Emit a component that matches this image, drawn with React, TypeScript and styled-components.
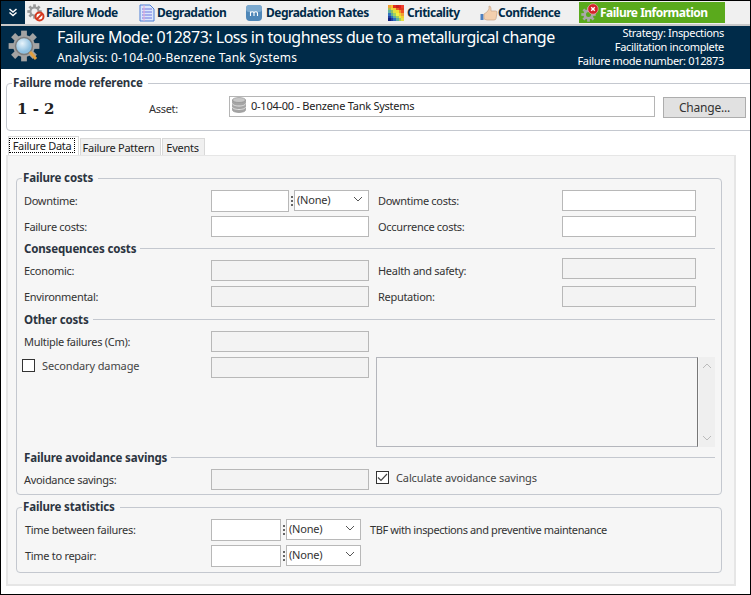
import React from 'react';
import styled, { createGlobalStyle } from 'styled-components';

const Global = createGlobalStyle`
  html, body { margin: 0; padding: 0; background: #fff; }
  body { font-family: "Noto Sans", "Open Sans", sans-serif; font-size: 11px; color: #333; }
  * { box-sizing: border-box; }
`;

const Frame = styled.div`
  width: 751px; height: 595px; border: 1px solid #000; background: #fff;
  display: flex; flex-direction: column; overflow: hidden;
`;
const Toolbar = styled.div`
  height: 25px; flex: none; display: flex; align-items: stretch;
  background: #f0f0f0; border-bottom: 2px solid #c9c9c9;
`;
const Chevron = styled.div`
  width: 24px; background: #002b49; display: flex; align-items: center; justify-content: center;
`;
const ToolItem = styled.div<{ $active?: boolean; $w: number; $gap: number }>`
  width: ${p => p.$w}px; flex: none; display: flex; align-items: center; gap: ${p => p.$gap}px;
  font-weight: 700; font-size: 12px; letter-spacing: -0.5px; white-space: nowrap; padding-left: 2px;
  color: ${p => (p.$active ? '#fff' : '#002b49')};
  background: ${p => (p.$active ? '#5aaa1c' : 'transparent')};
  ${p => (p.$active ? 'margin: 1px 0 1px 0;' : '')}
`;
const Banner = styled.div`
  height: 43px; flex: none; background: #002b49; color: #fff; display: flex; padding: 0 26px 0 7px;
`;
const BannerIcon = styled.div` width: 49px; flex: none; padding-top: 4px; `;
const BannerMain = styled.div` flex: 1; min-width: 0; display: flex; flex-direction: column; `;
const BannerTitle = styled.div` font-size: 16px; letter-spacing: -0.5px; line-height: 23px; white-space: nowrap; `;
const BannerSub = styled.div` font-size: 12px; letter-spacing: 0.2px; line-height: 16px; margin-top: 1px; white-space: nowrap; `;
const BannerSide = styled.div` text-align: right; font-size: 11px; letter-spacing: -0.33px; line-height: 14px; white-space: nowrap; `;

const Fieldset = styled.fieldset<{ $top: number; $left: number; $right: number; $h: number; $pad: number }>`
  margin: ${p => p.$top}px ${p => p.$right}px 0 ${p => p.$left}px;
  height: ${p => p.$h}px; flex: none; min-width: 0;
  border: 1px solid #c4c8cf; border-radius: 4px;
  padding: 0 0 0 ${p => p.$pad}px;
`;
const Legend = styled.legend<{ $shift: number }>`
  font-weight: 700; font-size: 11.5px; letter-spacing: -0.15px; line-height: 14px; color: #2b3440; padding: 0 5px 0 1px; margin-left: ${p => p.$shift}px; white-space: nowrap;
`;
const RefRow = styled.div` display: flex; align-items: flex-start; height: 34px; `;
const RefNumber = styled.div`
  width: 132px; font-family: "DejaVu Serif", serif; font-weight: 700; font-size: 15px; line-height: 22px; color: #222; margin-top: 8px;
`;
const AssetLabel = styled.div` width: 80px; letter-spacing: -0.3px; line-height: 14px; margin-top: 12px; `;
const AssetBox = styled.div`
  width: 426px; height: 21px; margin-top: 6px; border: 1px solid #b5b5b5; background: #fff; display: flex; align-items: center; gap: 4px; padding-left: 1px;
  color: #222; padding-bottom: 3px; letter-spacing: -0.25px; white-space: nowrap;
`;
const ChangeButton = styled.div`
  width: 83px; height: 21px; margin: 7px 0 0 8px; background: #e1e1e1; border: 1px solid #adadad; display: flex; align-items: center; justify-content: center; font-size: 12px; letter-spacing: -0.2px; color: #333;
`;

const TabStrip = styled.div` display: flex; align-items: flex-end; height: 18px; margin: 6px 0 0 7px; flex: none; `;
const Tab = styled.div<{ $active?: boolean; $w: number; $pr: number }>`
  width: ${p => p.$w}px; height: ${p => (p.$active ? 19 : 17)}px; border: 1px solid #d9d9d9; border-bottom: none; margin-right: 1px;
  display: flex; align-items: center; justify-content: center; background: ${p => (p.$active ? '#fff' : '#f0f0f0')}; color: #222; position: relative; font-size: 11px; letter-spacing: -0.28px; white-space: nowrap; z-index: ${p => (p.$active ? 1 : 0)};
  padding: 0 ${p => p.$pr}px ${p => (p.$active ? 1 : 0)}px 0;
`;
const Focus = styled.span` border: 1px dotted #000; padding: 0 3px; line-height: 13px; display: block; `;
const Panel = styled.div`
  margin: 0 14px 0 5px; height: 431px; flex: none; background: #f6f6f6; border: 2px solid #e6e6e6; border-top-width: 1px; padding: 0 0 0 8px; display: flex; flex-direction: column;
`;

const Row = styled.div<{ $top: number }>`
  display: grid; grid-template-columns: 187px 158px 9px 184px 134px; grid-template-rows: 21px; margin-top: ${p => p.$top}px; align-items: center;
`;
const StatRow = styled.div<{ $top: number }>`
  display: grid; grid-template-columns: 187px 150px 9px 1fr; grid-template-rows: 22px; margin-top: ${p => p.$top}px; align-items: center;
`;
const Label = styled.div<{ $col?: number; $in?: number }>`
  white-space: nowrap; color: #333; line-height: 14px; letter-spacing: -0.3px;
  ${p => (p.$col ? `grid-column: ${p.$col};` : '')}
  ${p => (p.$in ? `padding-left: ${p.$in}px;` : '')}
`;
const Note = styled(Label)` letter-spacing: -0.4px; `;
const Input = styled.div<{ $off?: boolean; $col?: number }>`
  height: 21px; border: 1px solid #b8b8b8; background: ${p => (p.$off ? '#f3f3f3' : '#fff')};
  ${p => (p.$col ? `grid-column: ${p.$col};` : '')}
`;
const RaisedInput = styled(Input)` align-self: start; margin-top: -2px; `;
const UnitWrap = styled.div` display: flex; align-items: flex-start; align-self: start; `;
const UnitInput = styled(Input)<{ $w: number }>` width: ${p => p.$w}px; height: 22px; flex: none; `;
const Dots = styled.div<{ $w: number }>`
  width: ${p => p.$w}px; flex: none; height: 21px; display: flex; flex-direction: column; align-items: center; justify-content: center; gap: 2px;
  i { width: 2px; height: 2px; background: #666; display: block; }
`;
const Select = styled.div<{ $w: number }>`
  width: ${p => p.$w}px; flex: none; height: 21px; border: 1px solid #b8b8b8; background: #fff; display: flex; align-items: center; justify-content: space-between; padding: 0 5px 3px 2px; color: #333; font-size: 11px; letter-spacing: -0.2px;
`;
const SectionHead = styled.div<{ $top: number }>`
  display: flex; align-items: center; gap: 4px; margin: ${p => p.$top}px 6px 0 0; height: 14px; font-weight: 700; font-size: 11.5px; letter-spacing: -0.15px; color: #2b3440; white-space: nowrap;
  &::after { content: ''; flex: 1; height: 1px; background: #c4c8cf; }
`;
const Check = styled.div`
  width: 13px; height: 13px; border: 1px solid #333; background: #fff; flex: none; display: flex; align-items: center; justify-content: center;
`;
const CheckLabel = styled.div<{ $wide?: boolean }>`
  display: flex; align-items: center; gap: 7px; letter-spacing: -0.12px; color: #444; margin: 0 0 4px -2px; white-space: nowrap;
  ${p => (p.$wide ? 'grid-column: 4 / 6;' : '')}
`;
const MemoCell = styled.div` display: flex; grid-column: 4 / 6; align-self: start; height: 90px; margin-right: -19px; margin-left: -2px; `;
const Memo = styled.div` flex: 1; border: 1px solid #b4b6bc; border-right-color: #777; background: #f6f6f6; `;
const Scroll = styled.div`
  width: 16px; margin-left: 1px; background: #efefef; display: flex; flex-direction: column; justify-content: space-between; align-items: center; padding: 6px 0;
`;
const ChevUp = styled.span` display: flex; transform: rotate(180deg); `;

const Chev = ({ c = '#555' }: { c?: string }) => (
  <svg width="10" height="6" viewBox="0 0 10 6"><path d="M1 1l4 4 4-4" fill="none" stroke={c} strokeWidth="1" /></svg>
);

const Gear = ({ size = 16, fill = '#9a9a9a' }: { size?: number; fill?: string }) => {
  const teeth = Array.from({ length: 8 }, (_, i) => i * 45);
  return (
    <g>
      {teeth.map(a => (
        <rect key={a} x={size / 2 - size * 0.09} y={size * 0.02} width={size * 0.18} height={size * 0.24} fill={fill} transform={`rotate(${a} ${size / 2} ${size / 2})`} />
      ))}
      <circle cx={size / 2} cy={size / 2} r={size * 0.34} fill={fill} />
    </g>
  );
};

const FailureModeIcon = () => (
  <svg width="18" height="18" viewBox="0 0 18 18">
    <Gear size={15} />
    <circle cx="7.5" cy="7.5" r="3" fill="#f0f0f0" />
    <circle cx="12.5" cy="12.5" r="4" fill="#fff" stroke="#d5391f" strokeWidth="2" />
    <path d="M9.8 15.2l5.4-5.4" stroke="#d5391f" strokeWidth="2" />
  </svg>
);
const DocIcon = () => (
  <svg width="16" height="18" viewBox="0 0 16 18">
    <path d="M1 1h10l4 4v12H1z" fill="#dbe6fb" stroke="#4d7fd6" />
    <path d="M3 5h10M3 8h10M3 11h10M3 14h10" stroke="#6f76e0" strokeWidth="1" />
    <path d="M5 1v16" stroke="#e9a7d5" strokeWidth="1" />
  </svg>
);
const RatesIcon = () => (
  <svg width="16" height="16" viewBox="0 0 16 16">
    <rect x="0" y="0" width="16" height="16" rx="4" fill="#4f87b8" />
    <rect x="0" y="0" width="16" height="7" rx="3" fill="#7ba9cf" />
    <path d="M4.5 11V6.5M4.5 7.5q1.5-1.3 2.8-.5q.7.4.7 1.5V11M8 7.5q1.5-1.3 2.8-.5q.7.4.7 1.5V11" stroke="#fff" fill="none" strokeWidth="1.1" />
  </svg>
);
const CritIcon = () => {
  const colors = [
    ['#f0a030', '#f6c030', '#e03020', '#c82020', '#e02020', '#f04030'],
    ['#a8c050', '#e8d840', '#f0d030', '#e86020', '#e83020', '#e04020'],
    ['#60b0a0', '#90c060', '#e0e040', '#f0e030', '#f09030', '#f05020'],
    ['#3070c0', '#60b090', '#a0d060', '#f0f040', '#f0d030', '#f0a030'],
    ['#2040a0', '#3070c0', '#60b0a0', '#a0d060', '#e8e840', '#f0d030'],
    ['#102080', '#2040a0', '#3070c0', '#60b0a0', '#a0d060', '#e8e040'],
  ];
  return (
    <svg width="16" height="16" viewBox="0 0 16 16" shapeRendering="crispEdges">
      {colors.map((r, y) => r.map((c, x) => <rect key={x + '-' + y} x={x * 16 / 6} y={y * 16 / 6} width={16 / 6 + .2} height={16 / 6 + .2} fill={c} />))}
    </svg>
  );
};
const ThumbIcon = () => (
  <svg width="18" height="18" viewBox="0 0 18 18">
    <rect x="0.5" y="10" width="3" height="6" fill="#4d7fc0" />
    <path d="M4 10l3-2 2-3V2q2 0 2 2.5V7h4.5q2 0 1.500 2l-1 5.500q-.3 1.500-2 1.500H7L4 15z" fill="#f3cfae" stroke="#c9a588" strokeWidth=".7" />
  </svg>
);
const FailInfoIcon = () => (
  <svg width="19" height="20" viewBox="0 0 19 20">
    <g transform="translate(0 4)"><Gear size={15} fill="#a9a9a9" /><circle cx="7.500" cy="7.500" r="2.500" fill="#5aaa1c" /></g>
    <circle cx="12" cy="6" r="5.200" fill="#d5232b" stroke="#f0c0c0" strokeWidth=".6" />
    <path d="M10.200 4.300l3.600 3.400M13.800 4.300l-3.600 3.400" stroke="#fff" strokeWidth="1.400" />
  </svg>
);
const BannerGear = () => (
  <svg width="34" height="34" viewBox="0 0 34 34">
    <defs>
      <radialGradient id="lens" cx=".4" cy=".35"><stop offset="0" stopColor="#e8f4fb" /><stop offset="1" stopColor="#8fc0e0" /></radialGradient>
    </defs>
    <Gear size={32} fill="#a3a3a3" />
    <circle cx="16" cy="16" r="8.500" fill="url(#lens)" stroke="#7d7d7d" strokeWidth="1.500" />
    <path d="M22 22l6 7" stroke="#e2a040" strokeWidth="3" />
  </svg>
);
const DbIcon = () => (
  <svg width="16" height="16" viewBox="0 0 14 16">
    <path d="M.5 3v10c0 1.500 3 2.500 6.500 2.500s6.500-1 6.500-2.500V3z" fill="#a5a5a5" stroke="#8c8c8c" strokeWidth=".6" />
    <ellipse cx="7" cy="3" rx="6.500" ry="2.500" fill="#c7c7c7" stroke="#8c8c8c" strokeWidth=".6" />
    <path d="M.5 6.500c0 1.500 3 2.500 6.500 2.500s6.500-1 6.500-2.500M.5 10c0 1.500 3 2.500 6.500 2.500s6.500-1 6.500-2.500" fill="none" stroke="#e2e2e2" />
  </svg>
);

const Handle = ({ w }: { w: number }) => <Dots $w={w}><i /><i /><i /></Dots>;

export default function App() {
  return (
    <Frame>
      <Global />
      <Toolbar>
        <Chevron>
          <svg width="10" height="9" viewBox="0 0 10 9"><path d="M1.500 1l3.500 3 3.500-3M1.500 4.500l3.500 3 3.500-3" fill="none" stroke="#fff" strokeWidth="1.500" /></svg>
        </Chevron>
        <ToolItem $w={112} $gap={1}><FailureModeIcon />Failure Mode</ToolItem>
        <ToolItem $w={107} $gap={2}><DocIcon />Degradation</ToolItem>
        <ToolItem $w={142} $gap={4}><RatesIcon />Degradation Rates</ToolItem>
        <ToolItem $w={92} $gap={3}><CritIcon />Criticality</ToolItem>
        <ToolItem $w={101} $gap={0}><ThumbIcon />Confidence</ToolItem>
        <ToolItem $w={146} $gap={0} $active><FailInfoIcon />Failure Information</ToolItem>
      </Toolbar>
      <Banner>
        <BannerIcon><BannerGear /></BannerIcon>
        <BannerMain>
          <BannerTitle>Failure Mode: 012873: Loss in toughness due to a metallurgical change</BannerTitle>
          <BannerSub>Analysis: 0-104-00-Benzene Tank Systems</BannerSub>
        </BannerMain>
        <BannerSide>
          <div>Strategy: Inspections</div>
          <div>Facilitation incomplete</div>
          <div>Failure mode number: 012873</div>
        </BannerSide>
      </Banner>
      <Fieldset $top={7} $left={5} $right={-4} $h={55} $pad={10}>
        <Legend $shift={-5}>Failure mode reference</Legend>
        <RefRow>
          <RefNumber>1 - 2</RefNumber>
          <AssetLabel>Asset:</AssetLabel>
          <AssetBox><DbIcon />0-104-00 - Benzene Tank Systems</AssetBox>
          <ChangeButton>Change...</ChangeButton>
        </RefRow>
      </Fieldset>
      <TabStrip>
        <Tab $active $w={71} $pr={3}><Focus>Failure Data</Focus></Tab>
        <Tab $w={81} $pr={4}>Failure Pattern</Tab>
        <Tab $w={43} $pr={2}>Events</Tab>
      </TabStrip>
      <Panel>
        <Fieldset $top={15} $left={0} $right={12} $h={324} $pad={7}>
          <Legend $shift={-2}>Failure costs</Legend>
          <Row $top={5}>
            <Label>Downtime:</Label>
            <UnitWrap><UnitInput $w={78} /><Handle w={5} /><Select $w={75}>(None)<Chev /></Select></UnitWrap>
            <Label $col={4}>Downtime costs:</Label>
            <Input />
          </Row>
          <Row $top={5}>
            <Label>Failure costs:</Label>
            <Input />
            <Label $col={4}>Occurrence costs:</Label>
            <Input />
          </Row>
          <SectionHead $top={4}>Consequences costs</SectionHead>
          <Row $top={5}>
            <Label>Economic:</Label>
            <Input $off />
            <Label $col={4}>Health and safety:</Label>
            <RaisedInput $off />
          </Row>
          <Row $top={5}>
            <Label>Environmental:</Label>
            <Input $off />
            <Label $col={4}>Reputation:</Label>
            <Input $off />
          </Row>
          <SectionHead $top={5}>Other costs</SectionHead>
          <Row $top={5}>
            <Label>Multiple failures (Cm):</Label>
            <Input $off />
          </Row>
          <Row $top={5}>
            <CheckLabel><Check />Secondary damage</CheckLabel>
            <Input $off />
            <MemoCell>
              <Memo />
              <Scroll>
                <ChevUp><Chev c="#bbb" /></ChevUp>
                <Chev c="#bbb" />
              </Scroll>
            </MemoCell>
          </Row>
          <SectionHead $top={72}>Failure avoidance savings</SectionHead>
          <Row $top={5}>
            <Label>Avoidance savings:</Label>
            <Input $off />
            <CheckLabel $wide>
              <Check>
                <svg width="11" height="9" viewBox="0 0 11 9"><path d="M1 4.500l3 3 6-6.500" fill="none" stroke="#444" strokeWidth="1.200" /></svg>
              </Check>
              Calculate avoidance savings
            </CheckLabel>
          </Row>
        </Fieldset>
        <Fieldset $top={5} $left={0} $right={12} $h={73} $pad={7}>
          <Legend $shift={-2}>Failure statistics</Legend>
          <StatRow $top={5}>
            <Label $in={1}>Time between failures:</Label>
            <UnitWrap><UnitInput $w={70} /><Handle w={5} /><Select $w={75}>(None)<Chev /></Select></UnitWrap>
            <Note $col={4}>TBF with inspections and preventive maintenance</Note>
          </StatRow>
          <StatRow $top={4}>
            <Label $in={1}>Time to repair:</Label>
            <UnitWrap><UnitInput $w={70} /><Handle w={5} /><Select $w={75}>(None)<Chev /></Select></UnitWrap>
          </StatRow>
        </Fieldset>
      </Panel>
    </Frame>
  );
}
